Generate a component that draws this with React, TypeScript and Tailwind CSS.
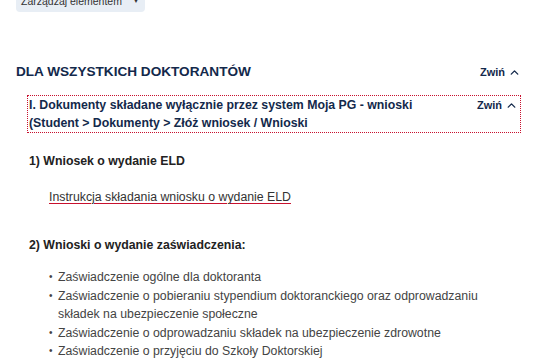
import React from 'react';
import { ChevronUp } from 'lucide-react';

const certificates = [
  'Zaświadczenie ogólne dla doktoranta',
  'Zaświadczenie o pobieraniu stypendium doktoranckiego oraz odprowadzaniu składek na ubezpieczenie społeczne',
  'Zaświadczenie o odprowadzaniu składek na ubezpieczenie zdrowotne',
  'Zaświadczenie o przyjęciu do Szkoły Doktorskiej',
];

const Collapse: React.FC = () => (
  <button className="flex items-center gap-[3px] text-[11px] font-bold text-[#13294b] leading-4 whitespace-nowrap">
    Zwiń
    <ChevronUp size={13} strokeWidth={2.5} />
  </button>
);

const App: React.FC = () => {
  return (
    <div className="w-[541px] h-[361px] overflow-hidden bg-white font-['Liberation_Sans',Arial,sans-serif]">
      <div className="px-4">
        {/* Manage button (scrolled partly out of view) */}
        <div className="-mt-[10px] flex w-fit items-center gap-[11px] rounded bg-[#e8eef5] pl-[5px] pr-[6px] py-1 text-[10.5px] leading-[14px] text-[#333]">
          Zarządzaj elementem
          <span className="text-[6px]">▼</span>
        </div>

        <section className="mt-[52px] pr-[4px]">
          <div className="flex items-center justify-between">
            <h2 className="text-[13.6px] font-bold uppercase leading-4 text-[#13294b]">
              Dla wszystkich doktorantów
            </h2>
            <Collapse />
          </div>

          <div className="ml-[11px] mt-[15px] flex justify-between border border-dotted border-[#c8102e] pl-[1px] pr-[2px]">
            <p className="text-[12.3px] font-bold leading-[18px] text-[#13294b]">
              I. Dokumenty składane wyłącznie przez system Moja PG - wnioski
              <br />
              (Student &gt; Dokumenty &gt; Złóż wniosek / Wnioski
            </p>
            <div className="pt-[1px]">
              <Collapse />
            </div>
          </div>

          <div className="pl-[13px] text-[12.3px] text-[#222]">
            <h3 className="mt-[19px] font-bold leading-[18px]">1) Wniosek o wydanie ELD</h3>
            <a
              href="#"
              className="mt-[18px] ml-5 inline-block leading-[18px] text-[#333] underline decoration-[#c8102e] underline-offset-2"
            >
              Instrukcja składania wniosku o wydanie ELD
            </a>

            <h3 className="mt-[30px] font-bold leading-[18px]">2) Wnioski o wydanie zaświadczenia:</h3>
            <ul className="mt-[14px] ml-[20px] pr-[20px] text-[12.3px] text-[#444] leading-[18.5px]">
              {certificates.map((c) => (
                <li key={c} className="flex">
                  <span className="w-[9px] shrink-0 text-[10px]">•</span>
                  <span>{c}</span>
                </li>
              ))}
            </ul>
          </div>
        </section>
      </div>
    </div>
  );
};

export default App;
